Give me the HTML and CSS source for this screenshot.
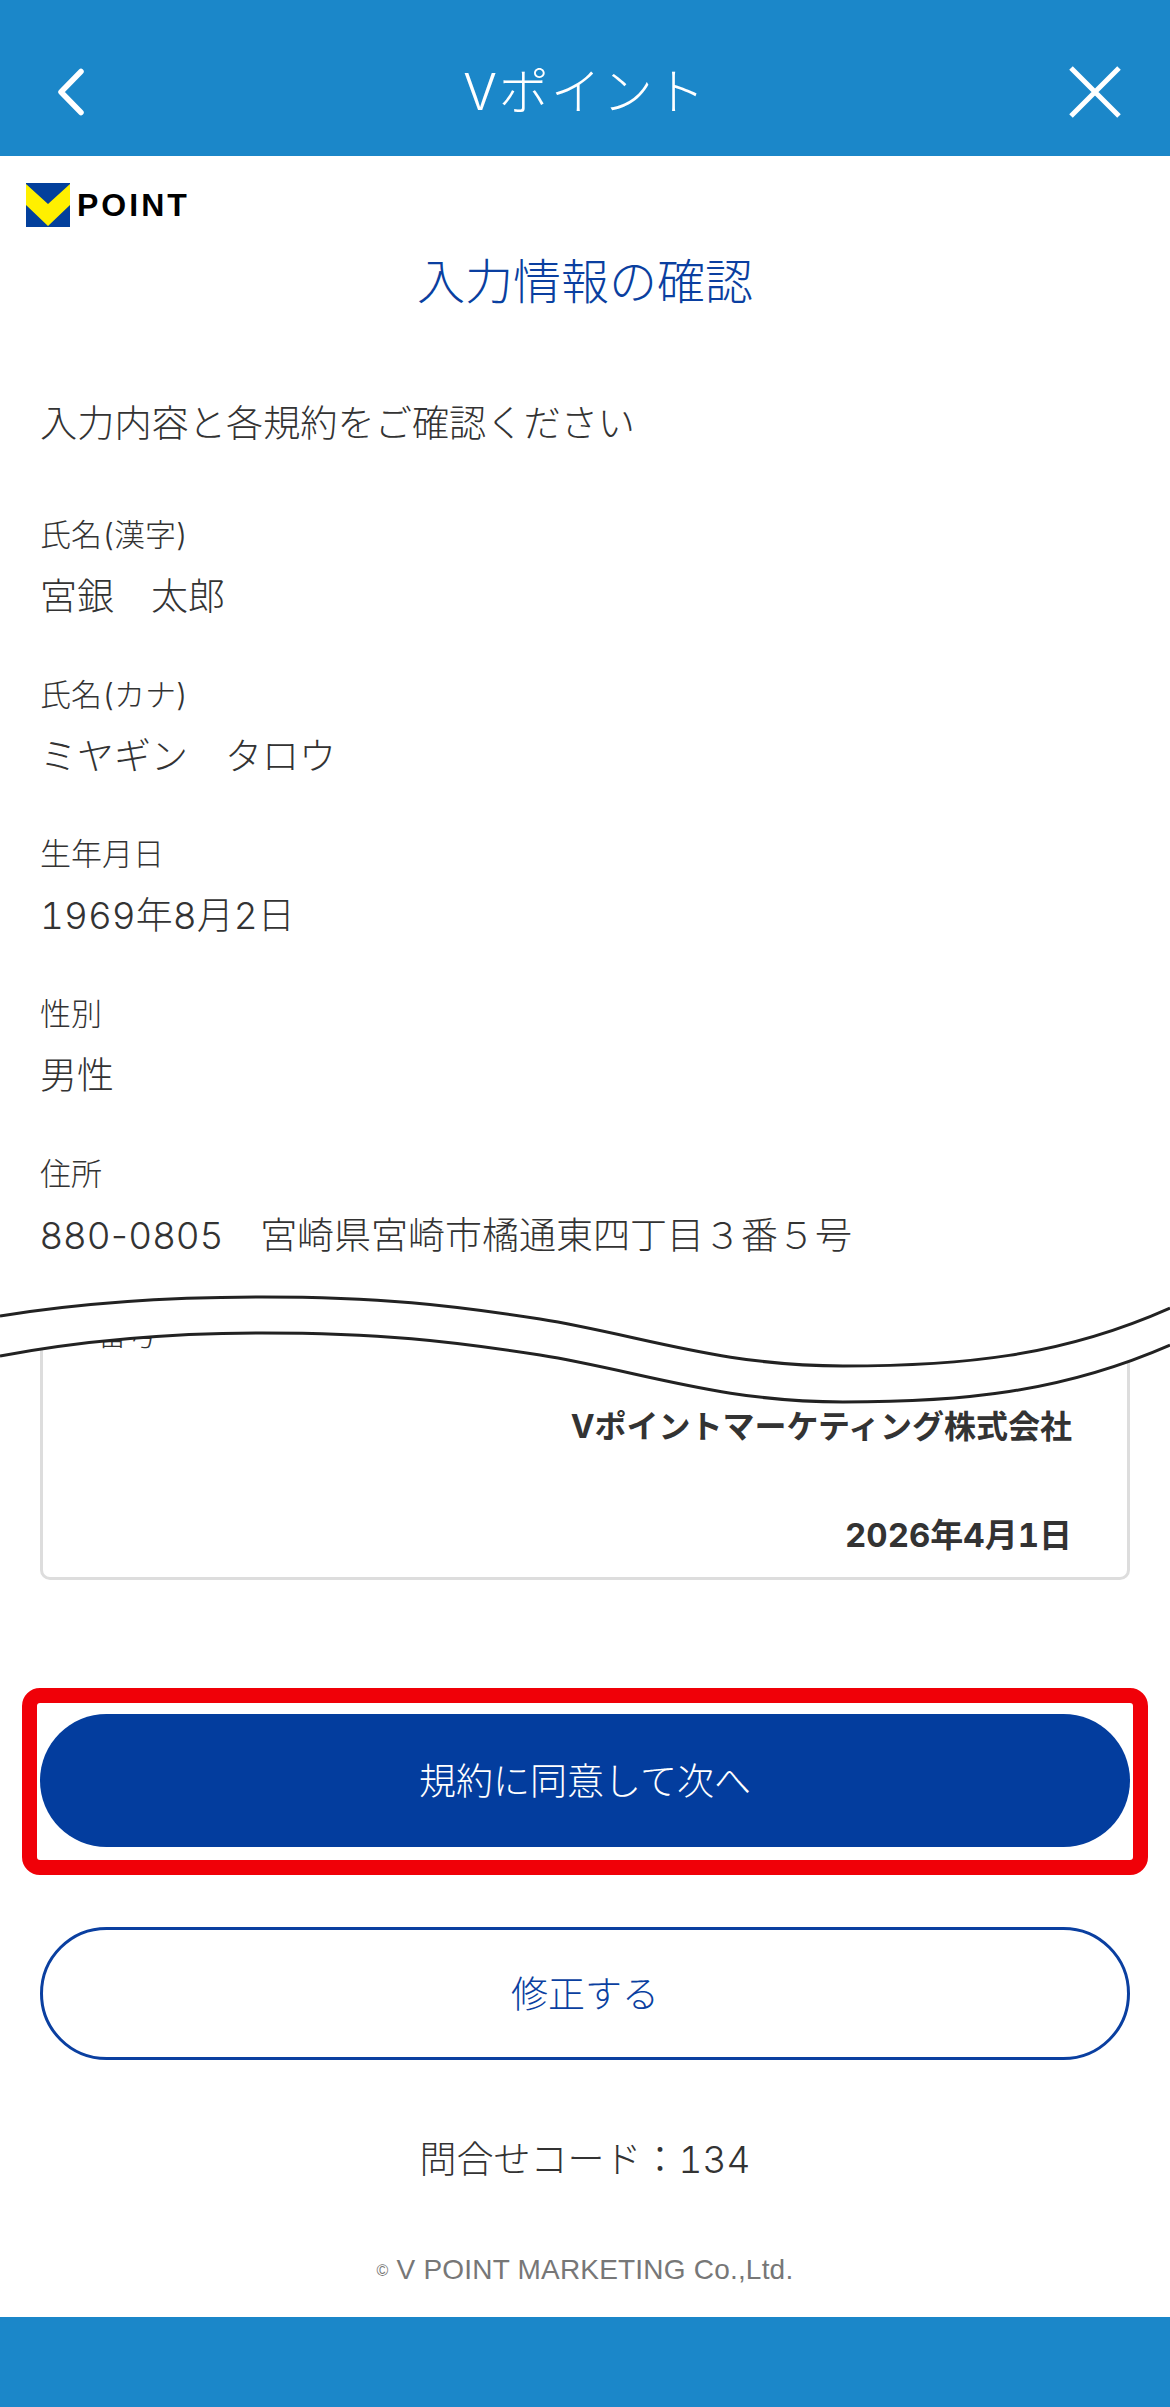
FILE: index.html
```html
<!DOCTYPE html>
<html lang="ja">
<head>
<meta charset="utf-8">
<title>Vポイント</title>
<link rel="stylesheet" href="styles.css">
</head>
<body>
<div class="page">
  <header class="topbar">
    <svg class="nav-icon" width="48" height="64" viewBox="0 0 48 64" aria-hidden="true"><path d="M34 11.5 L14 32 L34 52.5" fill="none" stroke="#fff" stroke-width="5.5" stroke-linecap="round" stroke-linejoin="round"/></svg>
    <h1 class="topbar-title">Vポイント</h1>
    <svg class="nav-icon" width="52" height="52" viewBox="0 0 52 52" aria-hidden="true"><path d="M2 2 L50 50 M50 2 L2 50" fill="none" stroke="#fff" stroke-width="5"/></svg>
  </header>
  <main class="content">
    <div class="brand">
      <svg width="44" height="44" viewBox="0 0 44 44" aria-hidden="true"><rect width="44" height="44" fill="#03409c"/><path d="M0 1 L22 21 L44 1 L44 22 L22 43 L0 22 Z" fill="#fff000"/></svg>
      <span class="brand-name">POINT</span>
    </div>
    <h2 class="page-title">入力情報の確認</h2>
    <p class="lead">入力内容と各規約をご確認ください</p>
    <dl class="fields">
      <div class="field"><dt>氏名(漢字)</dt><dd>宮銀　太郎</dd></div>
      <div class="field"><dt>氏名(カナ)</dt><dd>ミヤギン　タロウ</dd></div>
      <div class="field"><dt>生年月日</dt><dd>1969年8月2日</dd></div>
      <div class="field"><dt>性別</dt><dd>男性</dd></div>
      <div class="field"><dt>住所</dt><dd><span class="postal">880-0805</span>　宮崎県宮崎市橘通東四丁目３番５号</dd></div>
    </dl>
    <section class="cut-area">
      <svg class="wave" width="1170" height="130" viewBox="0 0 1170 130" aria-hidden="true">
        <path d="M0 -12 L1170 -12 L1170 48 C1060 96 960 105 843 105 C720 105 640 74 540 58 C450 44 380 36 262 36 C170 36 80 44 0 59 Z" fill="#fff"/>
        <path d="M0 19 C80 6 170 0 262 0 C380 0 450 8 540 22 C640 38 720 69 843 69 C960 69 1060 60 1170 11" fill="none" stroke="#222" stroke-width="3"/>
        <path d="M0 59 C80 44 170 36 262 36 C380 36 450 44 540 58 C640 74 720 105 843 105 C960 105 1060 96 1170 48" fill="none" stroke="#222" stroke-width="3"/>
      </svg>
      <div class="terms-card">
        <p class="terms-label">番号</p>
        <p class="terms-line terms-company">Vポイントマーケティング株式会社</p>
        <p class="terms-line terms-date">2026年4月1日</p>
      </div>
    </section>
    <div class="highlight"><button class="btn btn-primary" type="button">規約に同意して次へ</button></div>
    <button class="btn btn-secondary" type="button">修正する</button>
    <p class="code">問合せコード：134</p>
    <p class="copyright"><span class="copy-mark">©</span> V POINT MARKETING Co.,Ltd.</p>
  </main>
  <footer class="bottombar"></footer>
</div>
</body>
</html>
```
FILE: styles.css
```css
* { box-sizing: border-box; }
html, body { margin: 0; padding: 0; background: #fff; }
body { font-family: Inter, "Noto Sans CJK JP", sans-serif; font-variant-numeric: tabular-nums; color: #333; font-weight: 300; }
.page { width: 1170px; height: 2407px; display: flex; flex-direction: column; overflow: hidden; }
.topbar { height: 156px; flex: none; background: #1b87c9; display: flex; align-items: center; justify-content: space-between; padding: 28px 49px 0 47px; }
.topbar-title { margin: 0 0 0 6px; font-size: 50px; font-weight: 300; line-height: 60px; color: #fff; letter-spacing: 2px; }
.nav-icon { flex: none; }
.content { flex: 1; display: flex; flex-direction: column; padding: 0 40px; position: relative; }
.brand { display: flex; align-items: center; gap: 7px; margin: 27px 0 0 -14px; height: 44px; }
.brand-name { font-family: "Liberation Sans", sans-serif; font-weight: 700; font-size: 32px; letter-spacing: 3px; color: #000; }
.page-title { margin: 19px 0 0; text-align: center; font-size: 48px; line-height: 72px; font-weight: 300; color: #0a3fa0; }
.lead { margin: 79px 0 0; font-size: 37.2px; line-height: 54px; }
.fields { margin: 62px 0 0; display: flex; flex-direction: column; gap: 53.7px; }
.field { display: flex; flex-direction: column; gap: 18px; }
.field dt { font-size: 31px; line-height: 44px; }
.field dd { margin: 0; font-size: 37px; line-height: 44px; }
.postal { font-variant-numeric: normal; letter-spacing: 1px; }
.cut-area { position: relative; margin-top: 39px; }
.wave { position: absolute; top: 0; left: -40px; z-index: 1; overflow: visible; }
.terms-card { height: 271px; margin-top: 12px; border: 3px solid #ddd; border-radius: 10px; padding: 0 55px 0 0; }
.terms-label { margin: 0 0 0 54px; font-size: 30px; line-height: 44px; }
.terms-line { margin: 0; text-align: right; font-size: 32px; font-weight: 700; line-height: 46px; }
.terms-company { margin-top: 48px; }
.terms-date { margin-top: 62px; font-size: 33px; }
.highlight { margin: 108px -18px 0; border: 15px solid #f00008; border-radius: 18px; padding: 11px 3px 13px; background: #fff; }
.btn { display: block; width: 100%; height: 133px; border-radius: 67px; font-family: inherit; font-size: 37px; font-weight: 300; padding: 0 0 3px; }
.btn-primary { background: #033d9e; border: 0; color: #fff; }
.btn-secondary { background: #fff; border: 3px solid #0a3fa0; color: #0a3fa0; margin-top: 52px; }
.code { margin: 70px 0 0; text-align: center; font-size: 37px; line-height: 60px; }
.copyright { margin: 60px 0 0; text-align: center; font-size: 28px; line-height: 40px; color: #777; font-family: "Liberation Sans", sans-serif; font-weight: 400; letter-spacing: 0.2px; }
.copy-mark { font-size: 16px; vertical-align: 3px; }
.bottombar { height: 90px; flex: none; background: #1b87c9; }
```
